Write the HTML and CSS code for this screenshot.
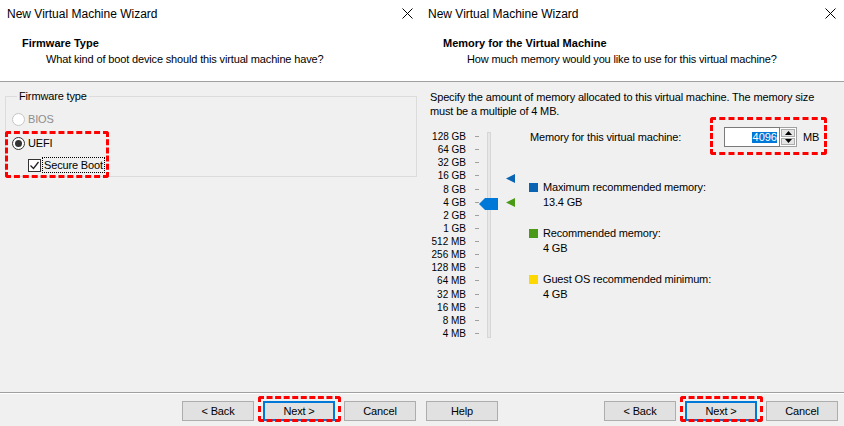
FILE: index.html
```html
<!DOCTYPE html>
<html lang="en">
<head>
    <meta charset="UTF-8">
    <title>New Virtual Machine Wizard</title>
    <link rel="stylesheet" href="styles.css">
</head>
<body>
    <!-- Firmware step -->
    <section class="wizard wizard-left">
        <div class="head">
            <div class="titlebar">
                <span>New Virtual Machine Wizard</span>
                <svg class="close" width="11" height="11" viewBox="0 0 11 11"><path d="M0.5 0.5L10.5 10.5M10.5 0.5L0.5 10.5" stroke="#000" stroke-width="1"/></svg>
            </div>
            <div class="step">
                <h2>Firmware Type</h2>
                <p>What kind of boot device should this virtual machine have?</p>
            </div>
        </div>
        <div class="body">
            <fieldset class="group">
                <legend>Firmware type</legend>
                <div class="opt disabled"><span class="radio"></span>BIOS</div>
                <div class="uefi">
                    <div class="opt"><span class="radio on"></span>UEFI</div>
                    <div class="opt sub">
                        <span class="check"><svg width="11" height="11" viewBox="0 0 11 11"><path d="M1.5 5.5L4.5 8.5L9.5 2" fill="none" stroke="#222" stroke-width="1.3"/></svg></span>
                        <span class="focus">Secure Boot</span>
                    </div>
                </div>
            </fieldset>
        </div>
        <div class="foot">
            <button class="btn">&lt; Back</button>
            <button class="btn default hl">Next &gt;</button>
            <button class="btn">Cancel</button>
        </div>
    </section>

    <!-- Memory step -->
    <section class="wizard wizard-right">
        <div class="head">
            <div class="titlebar">
                <span>New Virtual Machine Wizard</span>
                <svg class="close" width="11" height="11" viewBox="0 0 11 11"><path d="M0.5 0.5L10.5 10.5M10.5 0.5L0.5 10.5" stroke="#000" stroke-width="1"/></svg>
            </div>
            <div class="step">
                <h2>Memory for the Virtual Machine</h2>
                <p>How much memory would you like to use for this virtual machine?</p>
            </div>
        </div>
        <div class="body mem">
            <p class="desc">Specify the amount of memory allocated to this virtual machine. The memory size must be a multiple of 4 MB.</p>
            <div class="mem-row">
                <div class="scale">
                    <ul class="ticks" id="ticks"></ul>
                    <div class="track"></div>
                    <svg class="thumb" width="19" height="12" viewBox="0 0 19 12"><path d="M0 6L6 0H19V12H6Z" fill="#0078d7"/></svg>
                    <svg class="marker max" width="9" height="9" viewBox="0 0 9 9"><path d="M0 4.5L9 0V9Z" fill="#0a64b4"/></svg>
                    <svg class="marker rec" width="9" height="9" viewBox="0 0 9 9"><path d="M0 4.5L9 0V9Z" fill="#4b9a17"/></svg>
                </div>
                <div class="mem-info">
                    <div class="mem-input">
                        <span class="mem-label">Memory for this virtual machine:</span>
                        <span class="field"><span class="sel">4096</span></span>
                        <span class="spin">
                            <span class="arrow"><svg width="7" height="4" viewBox="0 0 7 4"><path d="M0 4L3.5 0L7 4Z" fill="#000"/></svg></span>
                            <span class="arrow"><svg width="7" height="4" viewBox="0 0 7 4"><path d="M0 0L3.5 4L7 0Z" fill="#000"/></svg></span>
                        </span>
                        <span class="unit">MB</span>
                    </div>
                    <div class="legend-item">
                        <span class="swatch blue"></span>
                        <div>Maximum recommended memory:<br>13.4 GB</div>
                    </div>
                    <div class="legend-item">
                        <span class="swatch green"></span>
                        <div>Recommended memory:<br>4 GB</div>
                    </div>
                    <div class="legend-item">
                        <span class="swatch yellow"></span>
                        <div>Guest OS recommended minimum:<br>4 GB</div>
                    </div>
                </div>
            </div>
        </div>
        <div class="foot">
            <button class="btn">Help</button>
            <span class="spacer"></span>
            <button class="btn">&lt; Back</button>
            <button class="btn default hl">Next &gt;</button>
            <button class="btn">Cancel</button>
        </div>
    </section>

    <script>
        // slider scale labels
        const sizes = ['128 GB', '64 GB', '32 GB', '16 GB', '8 GB', '4 GB', '2 GB', '1 GB',
            '512 MB', '256 MB', '128 MB', '64 MB', '32 MB', '16 MB', '8 MB', '4 MB'];
        const ticks = document.getElementById('ticks');
        sizes.forEach(function (s) {
            const li = document.createElement('li');
            li.innerHTML = '<span class="val">' + s + '</span><span class="tick"></span>';
            ticks.appendChild(li);
        });
    </script>
</body>
</html>
```

FILE: styles.css
```css
*, *::before, *::after {
    box-sizing: border-box;
}

body {
    margin: 0;
    width: 844px;
    height: 426px;
    display: flex;
    font-family: 'Liberation Sans', Arial, sans-serif;
    font-size: 11px;
    letter-spacing: -0.15px;
    color: #000;
    background: #f0f0f0;
    overflow: hidden;
}

.wizard {
    display: flex;
    flex-direction: column;
    height: 426px;
    background: #f0f0f0;
}

.wizard-left {
    width: 421px;
}

.wizard-right {
    width: 423px;
}

/* header */
.head {
    height: 82px;
    background: #fff;
    border-bottom: 1px solid #a0a0a0;
}

.titlebar {
    height: 28px;
    display: flex;
    align-items: center;
    justify-content: space-between;
    padding: 0 8px 0 7px;
    font-size: 12px;
    letter-spacing: 0;
}

.close {
    margin-top: -1px;
}

.step {
    padding: 8px 0 0 22px;
}

.step h2 {
    margin: 0;
    font-size: 11px;
    line-height: 14px;
    font-weight: bold;
    letter-spacing: 0;
}

.step p {
    margin: 2px 0 0 24px;
    line-height: 14px;
}

.body {
    flex: 1;
    position: relative;
}

/* firmware group */
.group {
    margin: 7px 4px 0 5px;
    padding: 7px 6px 2px 6px;
    border: 1px solid #dcdcdc;
    height: 88px;
}

.group legend {
    padding: 0 2px;
    margin-left: 5px;
    line-height: 14px;
    color: #000;
}

.opt {
    display: flex;
    align-items: center;
    height: 18px;
    gap: 3px;
}

.opt.disabled {
    color: #8d8d8d;
}

.uefi {
    position: relative;
    margin-top: 6px;
}

.uefi::after {
    content: "";
    position: absolute;
    left: -7px;
    top: -3px;
    width: 104px;
    height: 47px;
    border: 3px dashed #f00;
    border-radius: 3px;
}

.opt.sub {
    margin-top: 4px;
    padding-left: 16px;
    gap: 2px;
}

.radio {
    width: 13px;
    height: 13px;
    border: 1px solid #333;
    border-radius: 50%;
    background: #fff;
    position: relative;
}

.disabled .radio {
    border-color: #c6c6c6;
    background: #fff;
}

.radio.on::after {
    content: "";
    position: absolute;
    left: 2px;
    top: 2px;
    width: 7px;
    height: 7px;
    border-radius: 50%;
    background: #333;
}

.check {
    width: 13px;
    height: 13px;
    border: 1px solid #333;
    background: #fff;
    display: flex;
    align-items: center;
    justify-content: center;
}

.focus {
    outline: 1px dotted #000;
    padding: 0 1px;
    line-height: 14px;
}

/* footer buttons */
.foot {
    height: 34px;
    display: flex;
    justify-content: flex-end;
    padding: 8px 5px 0 0;
    border-top: 1px solid #a0a0a0;
    box-shadow: inset 0 1px #fff;
}

.wizard-right .foot {
    padding: 8px 6px 0 5px;
}

.spacer {
    flex: 1;
}

.btn {
    width: 72px;
    height: 20px;
    margin-left: 9px;
    padding: 0;
    border: 1px solid #adadad;
    background: #e1e1e1;
    font-family: inherit;
    font-size: 11px;
    letter-spacing: -0.15px;
    color: #000;
}

.spacer + .btn,
.btn:first-child {
    margin-left: 0;
}

.btn.default {
    border: 1px solid #0078d7;
    box-shadow: inset 0 0 0 1px #0078d7;
}

.hl {
    position: relative;
}

.hl::after {
    content: "";
    position: absolute;
    left: -6px;
    top: -6px;
    right: -7px;
    bottom: -2px;
    border: 3px dashed #f00;
    border-radius: 3px;
}

/* memory step */
.mem {
    padding: 8px 0 0 9px;
}

.desc {
    margin: 0;
    width: 400px;
    line-height: 14px;
}

.mem-row {
    display: flex;
    margin-top: 10px;
}

.scale {
    position: relative;
    width: 100px;
    display: flex;
    align-items: flex-start;
}

.ticks {
    list-style: none;
    margin: 0;
    padding: 2px 0 0 0;
    font-size: 10px;
    letter-spacing: 0;
}

.ticks li {
    display: flex;
    align-items: center;
    height: 13.13px;
}

.val {
    width: 36px;
    text-align: right;
}

.tick {
    width: 4px;
    height: 1px;
    margin-left: 9px;
    background: #a0a0a0;
}

.track {
    width: 4px;
    height: 206px;
    margin: 4px 0 0 8px;
    background: #e7e7e7;
    border: 1px solid #d6d6d6;
}

.thumb {
    position: absolute;
    left: 49px;
    top: 70px;
}

.marker {
    position: absolute;
    left: 76px;
}

.marker.max {
    top: 46px;
}

.marker.rec {
    top: 70px;
}

.mem-info {
    position: relative;
}

.mem-input {
    display: flex;
    align-items: center;
    height: 20px;
    margin-top: -1px;
}

.mem-label {
    width: 194px;
}

.field {
    width: 56px;
    height: 20px;
    border: 1px solid #7a7a7a;
    background: #fff;
    display: flex;
    align-items: center;
    justify-content: flex-end;
    padding-right: 2px;
}

.sel {
    background: #0078d7;
    color: #fff;
    line-height: 11px;
    padding: 0 0 0 1px;
    letter-spacing: 0;
}

.spin {
    width: 17px;
    height: 20px;
    display: flex;
    flex-direction: column;
    gap: 1px;
    padding: 1px;
    border: 1px solid #a0a0a0;
    border-left: none;
    background: #fff;
}

.arrow {
    flex: 1;
    display: flex;
    align-items: center;
    justify-content: center;
    background: #e5e5e5;
    border: 1px solid #acacac;
}

.unit {
    margin-left: 6px;
}

.mem-input::after {
    content: "";
    position: absolute;
    left: 180px;
    top: -11px;
    width: 117px;
    height: 38px;
    border: 3px dashed #f00;
    border-radius: 3px;
}

.legend-item {
    display: flex;
    align-items: flex-start;
    line-height: 15px;
    margin-top: 16px;
    margin-left: -1px;
}

.mem-input + .legend-item {
    margin-top: 33px;
}

.swatch {
    width: 9px;
    height: 9px;
    margin: 3px 5px 0 0;
    flex: none;
}

.swatch.blue { background: #0a64b4; }
.swatch.green { background: #4b9a17; }
.swatch.yellow { background: #ffd800; }
```
